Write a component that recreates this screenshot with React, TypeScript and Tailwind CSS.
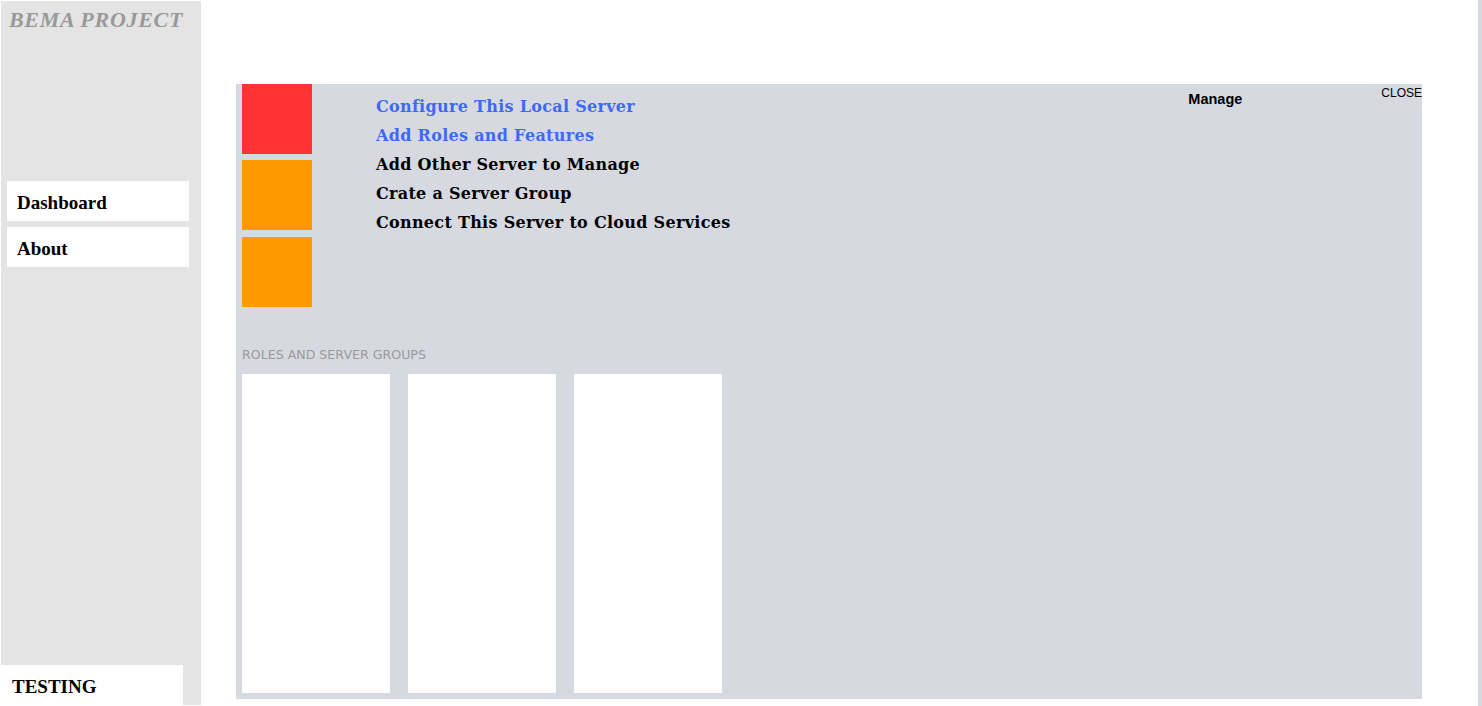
export default function App() {
  const serif = { fontFamily: '"DejaVu Serif", serif' };
  return (
    <div className="flex h-[706px] w-[1482px] overflow-hidden bg-white">
      <aside
        className="ml-px mt-px flex h-[704px] w-[200px] shrink-0 flex-col bg-[#e4e4e4]"
        style={{ fontFamily: '"Liberation Serif", serif' }}
      >
        <h1 className="pl-2 pt-[6px] text-[22px] font-bold italic leading-[26px] tracking-[0.7px] text-[#999999]">BEMA PROJECT</h1>
        <nav className="mt-[148px] flex flex-col gap-[6px] px-[6px]">
          <a className="flex h-10 w-[182px] items-center bg-white pl-[10px] pt-1 text-[19px] font-bold text-black">Dashboard</a>
          <a className="flex h-10 w-[182px] items-center bg-white pl-[10px] pt-1 text-[19px] font-bold text-black">About</a>
        </nav>
        <div className="mt-auto flex h-10 w-[182px] items-center bg-white pl-[11px] pt-1 text-[19px] font-bold text-black">
          TESTING
        </div>
      </aside>

      <main className="ml-[35px] mt-[84px] flex h-[615px] w-[1186px] shrink-0 flex-col bg-[#d6d9e0] pl-[6px]">
        <div className="flex">
          <div className="flex flex-col">
            <div className="h-[70px] w-[70px] bg-[#ff3333]" />
            <div className="mt-[6px] h-[70px] w-[70px] bg-[#ff9900]" />
            <div className="mt-[7px] h-[70px] w-[70px] bg-[#ff9900]" />
          </div>
          <ul className="ml-[64px] flex flex-col pt-[8px] text-[16px] font-bold leading-[29px] tracking-[0.3px]" style={serif}>
            <li className="text-[#3d6af5]">Configure This Local Server</li>
            <li className="text-[#3d6af5]">Add Roles and Features</li>
            <li className="text-black">Add Other Server to Manage</li>
            <li className="text-black">Crate a Server Group</li>
            <li className="text-black">Connect This Server to Cloud Services</li>
          </ul>
          <div
            className="ml-auto flex items-start"
            style={{ fontFamily: '"Liberation Sans", sans-serif' }}
          >
            <span className="pt-[7px] text-[14.5px] font-bold leading-4 text-black">Manage</span>
            <span className="ml-[139px] pt-[2px] text-[12px] leading-[14px] text-black">CLOSE</span>
          </div>
        </div>

        <div
          className="mt-[40px] text-[12.6px] leading-4 text-[#999999]"
          style={{ fontFamily: '"DejaVu Sans", sans-serif' }}
        >
          ROLES AND SERVER GROUPS
        </div>
        <div className="mt-[11px] flex gap-[18px]">
          <div className="h-[319px] w-[148px] bg-white" />
          <div className="h-[319px] w-[148px] bg-white" />
          <div className="h-[319px] w-[148px] bg-white" />
        </div>
      </main>

      <div className="ml-auto h-full w-1 bg-[#d6d9e0]" />
    </div>
  );
}
